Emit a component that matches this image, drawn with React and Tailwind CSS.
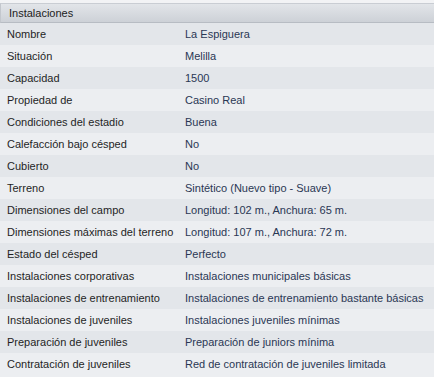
const rows = [
  ["Nombre", "La Espiguera"],
  ["Situación", "Melilla"],
  ["Capacidad", "1500"],
  ["Propiedad de", "Casino Real"],
  ["Condiciones del estadio", "Buena"],
  ["Calefacción bajo césped", "No"],
  ["Cubierto", "No"],
  ["Terreno", "Sintético (Nuevo tipo - Suave)"],
  ["Dimensiones del campo", "Longitud: 102 m., Anchura: 65 m."],
  ["Dimensiones máximas del terreno", "Longitud: 107 m., Anchura: 72 m."],
  ["Estado del césped", "Perfecto"],
  ["Instalaciones corporativas", "Instalaciones municipales básicas"],
  ["Instalaciones de entrenamiento", "Instalaciones de entrenamiento bastante básicas"],
  ["Instalaciones de juveniles", "Instalaciones juveniles mínimas"],
  ["Preparación de juveniles", "Preparación de juniors mínima"],
  ["Contratación de juveniles", "Red de contratación de juveniles limitada"],
];

export default function App() {
  return (
    <div
      className="w-[434px] h-[377px] bg-[#eceef1] overflow-hidden text-[11px]"
      style={{ fontFamily: '"Liberation Sans", Arial, sans-serif' }}
    >
      <div className="h-[3px] bg-[#f2f3f5]" />
      <div className="h-[20px] flex items-center pl-[8px] border-t border-b border-l border-t-[#c9cdd3] border-b-[#b7bcc3] border-l-[#c3c7cd] bg-gradient-to-b from-[#e2e5e9] to-[#cdd1d7] text-[#222]">
        Instalaciones
      </div>
      {rows.map(([label, value], i) => (
        <div
          key={label}
          className={`h-[22px] flex items-center ${i % 2 === 0 ? "bg-[#e3e6ea]" : "bg-[#eceef1]"}`}
        >
          <div className="w-[185px] pl-[7px] text-[#1f1f1f] whitespace-nowrap">{label}</div>
          <div className="text-[#2a3754] whitespace-nowrap">{value}</div>
        </div>
      ))}
    </div>
  );
}
